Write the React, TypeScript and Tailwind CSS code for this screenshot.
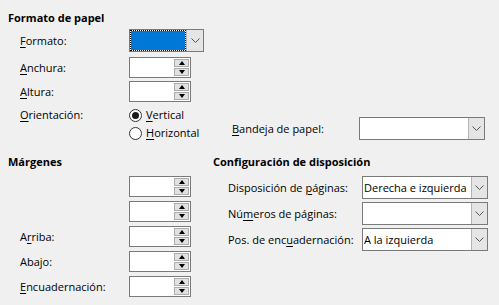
import React from "react";

const Chevron = () => (
  <svg width="9" height="6" viewBox="0 0 9 6" fill="none">
    <polyline points="0.5,0.5 4.5,4.5 8.5,0.5" stroke="#555" strokeWidth="1" />
  </svg>
);

const U = ({ children }: { children: React.ReactNode }) => <span className="underline underline-offset-[1.5px]">{children}</span>;

const Spin = ({ h = "h-[21px]" }: { h?: string }) => (
  <div className={`flex ${h} w-[62px] items-stretch border border-[#7a7a7a] bg-white`}>
    <div className="flex-1" />
    <div className="my-[1px] mr-[1px] flex w-[15px] flex-col gap-[1px]">
      <div className="flex flex-1 items-center justify-center border border-[#adadad] bg-[#e1e1e1]">
        <div className="h-0 w-0 border-x-[3.5px] border-b-[4px] border-x-transparent border-b-black" />
      </div>
      <div className="flex flex-1 items-center justify-center border border-[#adadad] bg-[#e1e1e1]">
        <div className="h-0 w-0 border-x-[3.5px] border-t-[4px] border-x-transparent border-t-black" />
      </div>
    </div>
  </div>
);

const Select = ({ value, w }: { value?: string; w: string }) => (
  <div className={`flex h-[23px] ${w} border border-[#7a7a7a] bg-white`}>
    <div className="flex flex-1 items-center overflow-hidden whitespace-nowrap pl-[1px]">{value}</div>
    <div className="flex w-[16px] items-center justify-center border-l border-[#b4b4b4] bg-[#e5e5e5]">
      <Chevron />
    </div>
  </div>
);

const Radio = ({ checked }: { checked?: boolean }) => (
  <div className="mr-[4px] flex h-[13px] w-[13px] items-center justify-center rounded-full border border-[#333] bg-white">
    {checked && <div className="h-[7px] w-[7px] rounded-full bg-[#1a1a1a]" />}
  </div>
);

export default function App() {
  return (
    <div
      className="h-[305px] w-[499px] overflow-hidden whitespace-nowrap bg-[#f0f0f0] pl-2 pt-[10px] text-[11px] leading-4 text-black"
      style={{ fontFamily: '"Open Sans", "Noto Sans", sans-serif' }}
    >
      <div className="h-4 font-bold">Formato de papel</div>
      <div className="pl-3">
        <div className="mt-[3px] flex h-[23px] items-center">
          <div className="w-[109px]">
            <U>F</U>ormato:
          </div>
          <div className="flex h-[23px] w-[75px] border border-[#7a7a7a] bg-white">
            <div className="flex-1 border border-dotted border-black bg-[#0078d7] bg-clip-padding" />
            <div className="flex w-[17px] items-center justify-center border-l border-[#b4b4b4] bg-[#e5e5e5]">
              <Chevron />
            </div>
          </div>
        </div>
        <div className="mt-[5px] flex h-[21px] items-center">
          <div className="w-[109px]">
            <U>A</U>nchura:
          </div>
          <Spin />
        </div>
        <div className="mt-[3px] flex h-[21px] items-center">
          <div className="w-[109px]">
            <U>A</U>ltura:
          </div>
          <Spin />
        </div>
        <div className="mt-[4px] flex items-start">
          <div className="flex h-[18px] w-[109px] items-center">
            <U>O</U>rientación:
          </div>
          <div className="flex w-[103px] flex-col">
            <div className="flex h-[18px] items-center">
              <Radio checked />
              <span>
                <U>V</U>ertical
              </span>
            </div>
            <div className="flex h-[18px] items-center">
              <Radio />
              <span>
                <U>H</U>orizontal
              </span>
            </div>
          </div>
          <div className="mt-[11px] flex h-[23px] items-center">
            <div className="w-[127px]">
              <U>B</U>andeja de papel:
            </div>
            <Select w="w-[126px]" />
          </div>
        </div>
      </div>

      <div className="mt-[12px] flex">
        <div className="w-[205px]">
          <div className="h-4 font-bold">Márgenes</div>
          <div className="mt-[6px] flex flex-col gap-[4px] pl-3">
            <div className="flex h-[21px] items-center">
              <div className="w-[109px]" />
              <Spin />
            </div>
            <div className="flex h-[21px] items-center">
              <div className="w-[109px]" />
              <Spin />
            </div>
            <div className="flex h-[21px] items-center">
              <div className="w-[109px]">
                A<U>r</U>riba:
              </div>
              <Spin />
            </div>
            <div className="flex h-[21px] items-center">
              <div className="w-[109px]">Abajo:</div>
              <Spin />
            </div>
            <div className="flex h-[21px] items-center">
              <div className="w-[109px]">
                <U>E</U>ncuadernación:
              </div>
              <Spin />
            </div>
          </div>
        </div>
        <div className="flex-1">
          <div className="h-4 font-bold">Configuración de disposición</div>
          <div className="mt-[6px] flex flex-col gap-[3px] pl-[15px]">
            <div className="flex h-[23px] items-center">
              <div className="w-[134px]">
                Disposición de <U>p</U>áginas:
              </div>
              <Select w="w-[126px]" value="Derecha e izquierda" />
            </div>
            <div className="flex h-[23px] items-center">
              <div className="w-[134px]">
                Nú<U>m</U>eros de páginas:
              </div>
              <Select w="w-[126px]" />
            </div>
            <div className="flex h-[23px] items-center">
              <div className="w-[134px]">
                Pos. de enc<U>u</U>adernación:
              </div>
              <Select w="w-[126px]" value="A la izquierda" />
            </div>
          </div>
        </div>
      </div>
    </div>
  );
}
